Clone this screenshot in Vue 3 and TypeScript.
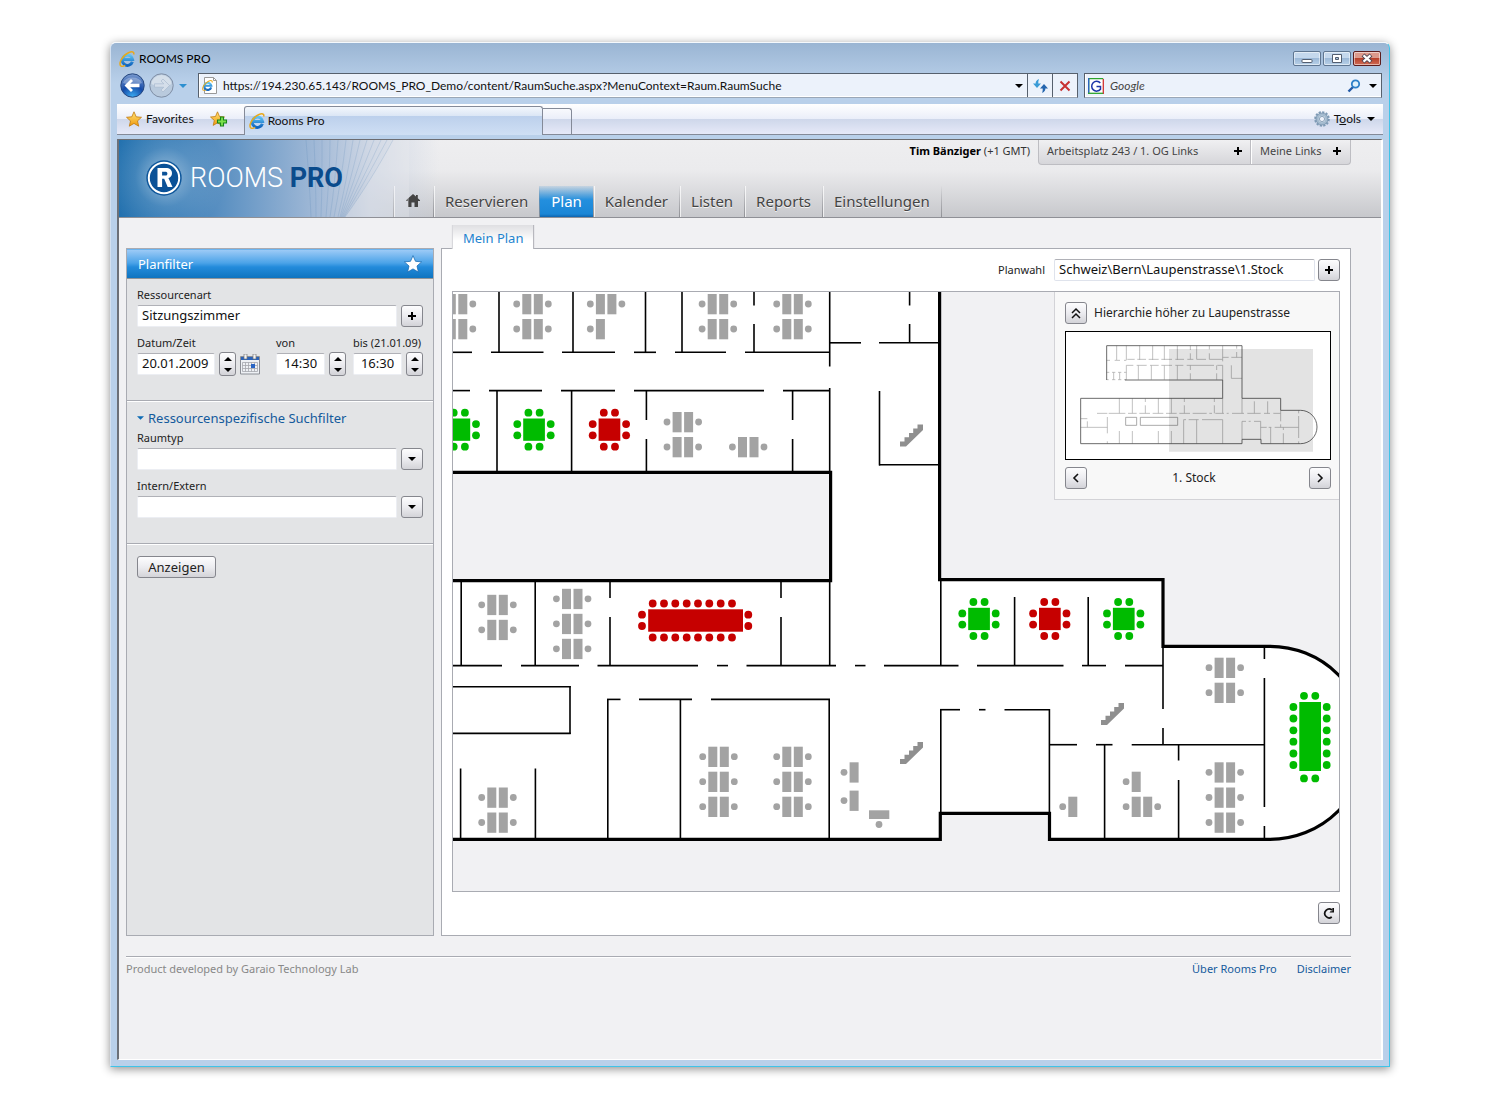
<script setup lang="ts">
import { ref } from 'vue'

type Wall = [number, number, number, number]
interface Desk { x: number; y: number; single?: boolean }
interface Room { x: number; y: number; free: boolean }

const navItems = ['Reservieren', 'Plan', 'Kalender', 'Listen', 'Reports', 'Einstellungen']
const activeNav = ref('Plan')

const address = ref('https://194.230.65.143/ROOMS_PRO_Demo/content/RaumSuche.aspx?MenuContext=Raum.RaumSuche')
const resource = ref('Sitzungszimmer')
const date = ref('20.01.2009')
const from = ref('14:30')
const until = ref('16:30')
const plan = ref('Schweiz\\Bern\\Laupenstrasse\\1.Stock')

const row = (y: number, pairs: [number, number][]): Wall[] => pairs.map(([a, b]) => [a, y, b, y])
const col = (x: number, pairs: [number, number][]): Wall[] => pairs.map(([a, b]) => [x, a, x, b])

const walls: Wall[] = [
  ...row(352.3, [[453, 472], [491, 543.5], [562, 615], [634, 656], [675, 726], [745, 830]]),
  ...row(390.6, [[453, 470], [489, 542], [561, 615], [634, 764], [783, 830]]),
  ...row(342.8, [[830, 861], [879, 939]]),
  ...row(464.8, [[879, 939]]),
  ...row(665.6, [[453, 502], [521, 579], [597.5, 698], [717, 728], [746.5, 836], [855, 865.5], [884, 958.5], [977, 1063.5], [1082, 1106], [1125, 1163]]),
  ...row(699.4, [[607, 620.5], [639, 692], [711, 830]]),
  ...row(709.7, [[940, 960], [979, 985.5], [1004.5, 1050]]),
  ...row(744.7, [[1050, 1077], [1096, 1112.5], [1131.7, 1264]]),
  ...row(686.7, [[453, 570.7]]),
  ...row(733.4, [[453, 570.7]]),
  ...col(570, [[686, 734]]),
  ...col(499, [[292, 352]]),
  ...col(573, [[292, 352]]),
  ...col(645.5, [[292, 352]]),
  ...col(682, [[292, 352]]),
  ...col(754, [[292, 305.5], [324, 352]]),
  ...col(829.7, [[292, 366.5], [388, 472], [581, 666]]),
  ...col(909.6, [[292, 305.5], [324, 343]]),
  ...col(879.5, [[391, 465.5]]),
  ...col(497, [[390, 471]]),
  ...col(571.6, [[390, 471]]),
  ...col(646.4, [[390, 420], [439, 471]]),
  ...col(792.6, [[390, 420], [439, 471]]),
  ...col(461.2, [[581, 665]]),
  ...col(535.2, [[581, 665]]),
  ...col(610, [[581, 598], [617, 665]]),
  ...col(781, [[581, 598], [617, 665]]),
  ...col(460.6, [[768.5, 838]]),
  ...col(535.4, [[768.5, 838]]),
  ...col(607.8, [[699, 838]]),
  ...col(680.4, [[699, 838]]),
  ...col(829.2, [[699, 838]]),
  ...col(940.8, [[581, 666], [709, 813]]),
  ...col(1049.4, [[709, 813]]),
  ...col(1014.6, [[597, 665]]),
  ...col(1088.2, [[597, 665]]),
  ...col(1163, [[647, 709], [728, 745]]),
  ...col(1264.4, [[647, 659], [678, 807], [826, 838]]),
  ...col(1104.6, [[745, 838]]),
  ...col(1178.6, [[744, 760.5], [780, 838]]),
]

const at = (x: number, ys: number[]): Desk[] => ys.map((y) => ({ x, y }))
const desks: Desk[] = [
  ...at(457, [304, 329]),
  ...at(532.5, [304, 329]),
  ...at(606.1, [304]),
  { x: 606.1, y: 329, single: true },
  ...at(717.9, [304, 329]),
  ...at(792.5, [304, 329]),
  ...at(682.8, [422, 447]),
  ...at(748.2, [447]),
  ...at(497.5, [604.8, 629.8, 797.5, 822.5]),
  ...at(572.2, [598.8, 623.8, 648.8]),
  ...at(718.5, [756.7, 781.7, 806.7]),
  ...at(792.5, [756.7, 781.7, 806.7]),
  { x: 859.8, y: 772.3, single: true },
  { x: 859.8, y: 800.6, single: true },
  { x: 1078.5, y: 806.7, single: true },
  { x: 1141.9, y: 781.7, single: true },
  ...at(1141.9, [806.7]),
  ...at(1224.8, [667.7, 692.7, 772.3, 797.5, 822.5]),
]

const rooms: Room[] = [
  { x: 459.3, y: 429.7, free: true },
  { x: 534, y: 429.7, free: true },
  { x: 609.4, y: 429.7, free: false },
  { x: 979, y: 619, free: true },
  { x: 1049.8, y: 619, free: false },
  { x: 1123.7, y: 619, free: true },
]
const seats: [number, number][] = [
  [-5.6, -17], [5.6, -17], [-5.6, 17], [5.6, 17],
  [-16.7, -5.6], [-16.7, 5.6], [16.7, -5.6], [16.7, 5.6],
]
const stairs: [number, number][] = [[900, 424.5], [900, 742], [1101, 703]]
const longSeats = [652.7, 664, 675.3, 686.7, 698, 709.3, 720.7, 732]
const tallSeats = [707, 718.5, 730.3, 741.7, 753.5, 765]

const miniWalls: Wall[] = [
  ...row(361, [[200, 210], [224, 240], [252, 259]]),
  ...row(358, [[262, 284], [292, 318], [326, 356], [364, 396], [406, 432], [442, 460], [470, 498], [508, 548]]),
  ...row(352, [[548, 566], [574, 606]]),
  ...row(376, [[259, 280], [290, 320], [330, 356], [364, 396], [406, 430], [440, 522], [532, 548]]),
  ...row(397, [[200, 208], [216, 226], [234, 244], [252, 259]]),
  ...row(419, [[200, 206], [216, 226], [234, 244], [252, 259]]),
  ...row(415, [[574, 606]]),
  ...row(520, [[171, 202], [206, 256], [264, 290], [298, 330], [338, 370], [378, 410], [418, 450], [458, 500], [508, 516], [526, 552], [560, 566], [576, 612], [622, 662], [672, 690], [700, 722]]),
  ...row(539, [[431, 438], [446, 476], [486, 548]]),
  ...row(544, [[606, 618], [626, 632], [642, 662]]),
  ...row(562, [[122, 202], [662, 680], [686, 694], [704, 776]]),
  ...row(536, [[122, 142]]),
  ...col(221, [[397, 419]]), ...col(239, [[397, 419]]),
  ...col(142, [[544, 562]]),
  ...[230, 259, 299, 338, 373, 412].flatMap((x) => col(x, [[317, 360]])),
  ...col(451, [[317, 330], [340, 358]]), ...col(470, [[317, 358]]),
  ...col(508, [[317, 328], [340, 358]]), ...col(548, [[317, 364], [376, 420]]),
  ...col(590, [[317, 326], [336, 352]]), ...col(574, [[376, 415]]),
  ...[259, 295, 334, 373, 412].flatMap((x) => col(x, [[376, 419]])),
  ...col(451, [[376, 390], [400, 419]]), ...col(530, [[376, 390], [400, 419]]),
  ...[238, 277, 355, 394, 548].flatMap((x) => col(x, [[475, 520]])),
  ...col(316, [[475, 486], [496, 520]]), ...col(433, [[475, 486], [496, 520]]),
  ...col(523, [[475, 486], [496, 520]]), ...col(606, [[475, 520], [544, 598]]),
  ...[643, 683].flatMap((x) => col(x, [[484, 520]])),
  ...col(202, [[531, 580], [604, 611]]),
  ...[238, 277, 355, 394].flatMap((x) => col(x, [[573, 611]])),
  ...[431, 470, 548].flatMap((x) => col(x, [[539, 611]])),
  ...col(662, [[544, 598]]), ...col(692, [[562, 611]]),
  ...col(730, [[562, 570], [580, 611]]),
  ...col(722, [[511, 544], [553, 562]]),
  ...col(776, [[511, 520], [528, 594], [604, 611]]),
]
</script>

<template>
  <svg class="defs" aria-hidden="true">
    <defs>
      <linearGradient id="blueE" x1="0" y1="0" x2="0" y2="1">
        <stop offset="0" stop-color="#5cc4f5" />
        <stop offset="1" stop-color="#0f63bd" />
      </linearGradient>
      <linearGradient id="gold" x1="0" y1="0" x2="0" y2="1">
        <stop offset="0" stop-color="#ffe478" />
        <stop offset="1" stop-color="#f0990c" />
      </linearGradient>
      <radialGradient id="navBlue" cx=".5" cy="1" r="1">
        <stop offset="0" stop-color="#3cb0f5" />
        <stop offset=".5" stop-color="#154aa8" />
        <stop offset="1" stop-color="#7d9dd0" />
      </radialGradient>
    </defs>
    <symbol id="ie" viewBox="0 0 16 16">
      <path d="M13.400 10.800A5.200 5.200 0 1 1 13.600 8.400H4.600" fill="none" stroke="url(#blueE)" stroke-width="3" />
      <path d="M2 15.200C-1 12.500 3.500 4.500 9.500 1.800 13 .2 15.600 .6 14.600 3.600" fill="none" stroke="#e9a91c" stroke-width="1.500" />
      <path d="M2 15.200c1.200.6 2.800 0 4.200-.9" fill="none" stroke="#e9a91c" stroke-width="1.300" />
    </symbol>
    <symbol id="plus" viewBox="0 0 8 8">
      <path d="M3 0h2v3h3v2H5v3H3V5H0V3h3z" />
    </symbol>
    <symbol id="down" viewBox="0 0 8 4">
      <path d="M0 0h8L4 4z" />
    </symbol>
    <symbol id="up" viewBox="0 0 8 4">
      <path d="M0 4h8L4 0z" />
    </symbol>
  </svg>

  <div class="desktop">
    <div class="window">
      <div class="titlebar">
        <svg class="ie"><use href="#ie" /></svg>
        <span class="title">ROOMS PRO</span>
        <div class="winbuttons">
          <button type="button" aria-label="Minimieren">
            <svg width="12" height="12" viewBox="0 0 12 12"><rect x="1" y="6.500" width="10" height="3" rx=".5" fill="#fff" stroke="#535e70" /></svg>
          </button>
          <button type="button" aria-label="Wiederherstellen">
            <svg width="12" height="12" viewBox="0 0 12 12"><path d="M1.500 1.500h9v8h-9z" fill="#fff" stroke="#535e70" /><path d="M4.500 4.500h3v2h-3z" fill="#aac4e0" stroke="#535e70" /></svg>
          </button>
          <button type="button" class="close" aria-label="Schliessen">
            <svg width="12" height="12" viewBox="0 0 12 12"><path d="M2 2l8 7M10 2l-8 7" stroke="#4e4350" stroke-width="4.200" /><path d="M2.500 2.400l7 6.200M9.500 2.400l-7 6.200" stroke="#fff" stroke-width="2.200" /></svg>
          </button>
        </div>
      </div>

      <div class="addressrow">
        <div class="history">
          <button type="button" class="round" aria-label="Zurück">
            <svg width="25" height="25" viewBox="0 0 25 25"><circle cx="12.500" cy="12.500" r="11.700" fill="url(#navBlue)" stroke="#26477f" /><path d="M3 10a10 8 0 0 1 19 0c-5 2-13 2-19 0z" fill="#fff" opacity=".3" /><path d="M4.500 12.500l6.500-6.500 2 2-2.800 2.800h9.300v3.400h-9.300L13 17l-2 2z" fill="#fff" /></svg>
          </button>
          <button type="button" class="round" aria-label="Vorwärts">
            <svg width="25" height="25" viewBox="0 0 25 25"><circle cx="12.500" cy="12.500" r="11.700" fill="#b9cadd" stroke="#7f8ea5" /><path d="M2.500 11a10 9 0 0 1 20 0c-5 3-14 3-20 0z" fill="#fff" opacity=".4" /><path d="M20.500 12.500L14 6l-2 2 2.800 2.800H5.500v3.400h9.300L12 17l2 2z" fill="#d4deea" stroke="#a5b6cb" stroke-width=".6" /></svg>
          </button>
          <svg class="tri" fill="#2c8fd0"><use href="#down" /></svg>
        </div>
        <div class="address">
          <svg width="16" height="18" viewBox="0 0 16 18"><path d="M2.500.5h9l3 3v13h-12z" fill="#fff" stroke="#999" /><path d="M11.500.5v3h3" fill="none" stroke="#999" /><use href="#ie" x="0" y="3" width="11" height="11" /></svg>
          <input v-model="address" aria-label="Adresse" type="text">
          <svg class="tri"><use href="#down" /></svg>
          <button type="button" aria-label="Aktualisieren">
            <svg width="15" height="14" viewBox="0 0 15 14"><path d="M6 0C3 1.200 2.600 3 2.700 4.500H0L4 9l4-4.500H5.300C5.200 3 5.300 1.500 6 0z" fill="#3a9bd6" /><path d="M9 14c3-1.200 3.400-3 3.300-4.500H15L11 5 7 9.500h2.700C9.800 11 9.700 12.500 9 14z" fill="#2465ae" /></svg>
          </button>
          <button type="button" aria-label="Stopp">
            <svg width="12" height="12" viewBox="0 0 12 12"><path d="M1.500 1.500l9 9M10.500 1.500l-9 9" stroke="#c83232" stroke-width="2" /></svg>
          </button>
        </div>
        <div class="search">
          <svg width="16" height="16" viewBox="0 0 16 16"><path d="M0 0h16v16H0z" fill="#fff" /><path d="M.7 16V.7h14.600" fill="none" stroke="#2ca32c" stroke-width="1.300" /><path d="M.7 0v16" stroke="#2c62c8" stroke-width="1.300" /><path d="M15.300 1v15" stroke="#d03030" stroke-width="1.300" /><path d="M0 15.300h15" stroke="#2ca32c" stroke-width="1.300" /><path d="M12.300 5A4.900 4.900 0 1 0 12.500 11.200V8.500H8.500" fill="none" stroke="#1d35a8" stroke-width="1.500" /></svg>
          <input type="search" placeholder="Google" aria-label="Google-Suche">
          <svg width="14" height="14" viewBox="0 0 14 14"><path d="M6 8l-4.500 4.500" stroke="#2358a5" stroke-width="2.400" /><circle cx="8.500" cy="5" r="3.700" fill="#dff0fb" stroke="#2c7fc8" stroke-width="1.800" /></svg>
          <svg class="tri dark"><use href="#down" /></svg>
        </div>
      </div>

      <div class="tabrow">
        <button type="button" class="fav">
          <svg width="16" height="16" viewBox="0 0 16 16"><path d="M8 .8l2.200 5 5.300.5-4 3.600 1.200 5.300L8 12.400l-4.700 2.800 1.200-5.300-4-3.600 5.300-.5z" fill="url(#gold)" stroke="#c07a10" stroke-width=".8" /></svg>
          Favorites
        </button>
        <button type="button" class="addfav" aria-label="Zu Favoriten hinzufügen">
          <svg width="18" height="16" viewBox="0 0 18 16"><path d="M7.500.8l2 4.700 5 .5-3.800 3.400 1.100 5-4.300-2.600-4.300 2.600 1.100-5L.5 6l5-.5z" fill="url(#gold)" stroke="#c07a10" stroke-width=".8" /><path d="M10.500 6h3v3h3v3h-3v3h-3v-3h-3V9h3z" fill="#7be04a" stroke="#17851a" stroke-width="1.100" /></svg>
        </button>
        <a href="#" class="browsertab"><svg class="ie"><use href="#ie" /></svg>Rooms Pro</a>
        <button type="button" class="newtab" aria-label="Neuer Tab"></button>
        <button type="button" class="tools">
          <svg width="16" height="16" viewBox="0 0 16 16"><circle cx="8" cy="8" r="6.800" fill="none" stroke="#7d9ab5" stroke-width="2" stroke-dasharray="2.200 1.360" /><circle cx="8" cy="8" r="4.700" fill="#dde8f1" stroke="#a3bace" stroke-width="2.800" /><circle cx="8" cy="8" r="6" fill="none" stroke="#7691ab" stroke-width=".8" /><circle cx="8" cy="8" r="2.600" fill="#eef2fa" stroke="#7691ab" stroke-width=".8" /></svg>
          <span>T<u>o</u>ols</span>
          <svg class="tri"><use href="#down" /></svg>
        </button>
      </div>

      <div class="viewport">
        <header class="apphead">
          <svg class="swoosh" width="290" height="77" viewBox="0 0 290 77" aria-hidden="true">
            <path d="M274 0c-14 26-30 52-48 77h64V0z" fill="#ececf0" opacity=".3" />
            <g fill="none" stroke="#4f7db0" stroke-width=".6" opacity=".3">
              <path d="M274 0c-14 26-30 52-48 77M268 0c-14 26-28 52-43 77M262 0c-12 26-25 52-38 77M255 0c-10 26-21 52-32 77M248 0c-8 26-17 52-26 77M241 0c-6 26-13 52-20 77M234 0c-4 26-9 52-15 77M227 0c-3 26-7 52-12 77M219 0c-2 26-4 52-8 77M211 0c0 26-2 52-4 77M203 0c0 26 0 52-1 77M195 0c1 26 2 52 2 77M187 0c2 26 4 52 5 77" />
            </g>
          </svg>
          <div class="logo">
            <svg width="36" height="36" viewBox="0 0 36 36" aria-hidden="true"><circle cx="18" cy="18" r="17.700" fill="#0d569b" /><circle cx="18" cy="18" r="15.200" fill="#0a5197" stroke="#fff" stroke-width="2" /><path d="M11.500 8h8.200c4 0 6.300 1.900 6.300 5.300 0 2.500-1.400 4.200-3.600 4.800L26.500 27h-4.800l-3.500-8.200h-2.100V27h-4.600zM16.100 11.700v3.900h3c1.500 0 2.300-.6 2.300-1.900 0-1.400-.8-2-2.300-2z" fill="#fff" fill-rule="evenodd" /></svg>
            <span class="brand">ROOMS <b>PRO</b></span>
          </div>
          <div class="headmain">
            <div class="userbar">
              <span class="user"><b>Tim Bänziger</b> (+1 GMT)</span>
              <div class="quick">
                <button type="button" class="wide">Arbeitsplatz 243 / 1. OG Links <svg class="p"><use href="#plus" /></svg></button>
                <button type="button">Meine Links <svg class="p"><use href="#plus" /></svg></button>
              </div>
            </div>
            <nav class="nav">
              <a href="#" class="home" aria-label="Startseite"><svg width="14" height="13" viewBox="0 0 14 13"><path d="M7 0l3 2.600V1h1.800v3.200L14 6.200v.8h-2v6H8.500V8.500h-3V13H2V7H0v-.8z" fill="#444" /></svg></a>
              <a v-for="n in navItems" :key="n" href="#" :class="{ on: n === activeNav }" @click.prevent="activeNav = n">{{ n }}</a>
            </nav>
          </div>
        </header>

        <div class="content">
          <form class="filter" @submit.prevent>
            <div class="filterhead">
              <h2>Planfilter</h2>
              <svg width="18" height="18" viewBox="0 0 18 18"><path d="M9 .6l2.500 5.700 6.100.6-4.600 4.100 1.400 6.100L9 13.900l-5.400 3.200L5 11 .4 6.900l6.100-.6z" fill="#fff" stroke="#1b6db5" stroke-width=".8" /></svg>
            </div>
            <section>
              <label for="res">Ressourcenart</label>
              <div class="field">
                <input id="res" v-model="resource" type="text">
                <button type="button" class="sq" aria-label="Ressourcenart wählen"><svg class="p"><use href="#plus" /></svg></button>
              </div>
              <div class="times">
                <div>
                  <label for="date">Datum/Zeit</label>
                  <div class="field">
                    <input id="date" v-model="date" class="date" type="text">
                    <span class="spin">
                      <button type="button" aria-label="Tag später"><svg><use href="#up" /></svg></button>
                      <button type="button" aria-label="Tag früher"><svg><use href="#down" /></svg></button>
                    </span>
                    <button type="button" class="cal" aria-label="Kalender">
                      <svg width="20" height="21" viewBox="0 0 20 21"><path d="M.5 2.500h19v17.500H.5z" fill="#eef1f5" stroke="#8c8f96" /><path d="M1 3h18v3H1z" fill="#2b63b8" /><path d="M4 0h3v5H4zM13 0h3v5h-3z" fill="#f4f4f4" stroke="#777" stroke-width=".7" /><path d="M2.500 8.500h15M2.500 11.500h15M2.500 14.500h15M2.500 17.500h15M2.500 8.500v9M5.500 8.500v9M8.500 8.500v9M11.500 8.500v9M14.500 8.500v9M17.500 8.500v9" stroke="#a4a7ad" stroke-width=".8" /><path d="M11 10h4v4h-4z" fill="#2864c4" /></svg>
                    </button>
                  </div>
                </div>
                <div>
                  <label for="from">von</label>
                  <div class="field">
                    <input id="from" v-model="from" class="time" type="text">
                    <span class="spin">
                      <button type="button" aria-label="Von später"><svg><use href="#up" /></svg></button>
                      <button type="button" aria-label="Von früher"><svg><use href="#down" /></svg></button>
                    </span>
                  </div>
                </div>
                <div>
                  <label for="until">bis (21.01.09)</label>
                  <div class="field">
                    <input id="until" v-model="until" class="time" type="text">
                    <span class="spin">
                      <button type="button" aria-label="Bis später"><svg><use href="#up" /></svg></button>
                      <button type="button" aria-label="Bis früher"><svg><use href="#down" /></svg></button>
                    </span>
                  </div>
                </div>
              </div>
            </section>
            <section>
              <h3><svg class="tri"><use href="#down" /></svg>Ressourcenspezifische Suchfilter</h3>
              <label for="type">Raumtyp</label>
              <div class="drop">
                <span class="box"></span><span class="sq"><svg class="tri"><use href="#down" /></svg></span>
                <select id="type"><option value=""></option></select>
              </div>
              <label for="scope" class="next">Intern/Extern</label>
              <div class="drop">
                <span class="box"></span><span class="sq"><svg class="tri"><use href="#down" /></svg></span>
                <select id="scope"><option value=""></option></select>
              </div>
            </section>
            <div class="actions"><button type="submit">Anzeigen</button></div>
          </form>

          <main>
            <a href="#" class="plantab">Mein Plan</a>
            <div class="panel">
              <div class="choose">
                <label for="plan">Planwahl</label>
                <input id="plan" v-model="plan" type="text">
                <button type="button" class="sq" aria-label="Plan wählen"><svg class="p"><use href="#plus" /></svg></button>
              </div>

              <div class="floor">
                <svg class="floorplan" viewBox="453 292 886 599" preserveAspectRatio="xMinYMin slice" role="img" aria-label="Grundriss 1. Stock">
                  <path d="M440 280H939.600V579.700H1163V646.300H1270A96.500 96.500 0 0 1 1270 839.300H1049.500V813.300H940.300V839.300H440Z" fill="#fff" stroke="#000" stroke-width="3.200" />
                  <path d="M440 472.300H830.600V580.600H440Z" fill="#f1f1f3" stroke="#000" stroke-width="3.200" />
                  <line v-for="(w, i) in walls" :key="i" :x1="w[0]" :y1="w[1]" :x2="w[2]" :y2="w[3]" stroke="#000" stroke-width="1.600" />
                  <g fill="#a3a3a3">
                    <g v-for="(d, i) in desks" :key="i" :transform="`translate(${d.x} ${d.y})`">
                      <rect x="-10.200" y="-10" width="9" height="20.300" />
                      <circle cx="-15.800" cy="0" r="3.400" />
                      <template v-if="!d.single">
                        <rect x="1.300" y="-10" width="9" height="20.300" />
                        <circle cx="15.800" cy="0" r="3.400" />
                      </template>
                    </g>
                    <rect x="869" y="810.300" width="20.300" height="8.700" />
                    <circle cx="879" cy="824.500" r="3.400" />
                  </g>
                  <path v-for="(s, i) in stairs" :key="i" d="M23 0h-5.500v4h-4.300v4.500H9v4.300H4.500V17H0v5h6L23 5.500z" :transform="`translate(${s[0]} ${s[1]})`" fill="#8f8f8f" />
                  <g v-for="(r, i) in rooms" :key="i" :transform="`translate(${r.x} ${r.y})`" :fill="r.free ? '#00bb00' : '#c60000'">
                    <rect x="-10.800" y="-11.200" width="21.700" height="22.300" />
                    <circle v-for="(s, j) in seats" :key="j" :cx="s[0]" :cy="s[1]" r="3.900" />
                  </g>
                  <g fill="#c60000">
                    <rect x="648.200" y="609.300" width="94.800" height="22.400" />
                    <template v-for="x in longSeats" :key="x">
                      <circle :cx="x" cy="603.500" r="3.900" /><circle :cx="x" cy="637.500" r="3.900" />
                    </template>
                    <template v-for="y in [614.7, 626]" :key="y">
                      <circle cx="642" :cy="y" r="3.900" /><circle cx="748.300" :cy="y" r="3.900" />
                    </template>
                  </g>
                  <g fill="#00bb00">
                    <rect x="1299.300" y="702" width="21.700" height="69" />
                    <template v-for="y in tallSeats" :key="y">
                      <circle cx="1293.400" :cy="y" r="3.900" /><circle cx="1326.700" :cy="y" r="3.900" />
                    </template>
                    <template v-for="x in [1304, 1315.3]" :key="x">
                      <circle :cx="x" cy="695.800" r="3.900" /><circle :cx="x" cy="778.400" r="3.900" />
                    </template>
                  </g>
                </svg>

                <aside class="overview">
                  <div class="line">
                    <button type="button" class="sq" aria-label="Ebene höher"><svg width="10" height="12" viewBox="0 0 10 12"><path d="M1 6l4-4 4 4M1 11l4-4 4 4" fill="none" stroke="#111" stroke-width="1.500" /></svg></button>
                    <span>Hierarchie höher zu Laupenstrasse</span>
                  </div>
                  <svg class="mini" viewBox="78 276 792 381" role="img" aria-label="Übersicht">
                    <g fill="none" stroke="#a8a8a8" stroke-width="2.200">
                      <line v-for="(w, i) in miniWalls" :key="i" :x1="w[0]" :y1="w[1]" :x2="w[2]" :y2="w[3]" />
                      <path d="M257 532h33v24h-33zM301 532h112v24H301z" stroke="#8a8a8a" />
                    </g>
                    <path d="M200 420V317H606V475H722V511H782A49 50 0 0 1 782 611H663V598H606V611H122V475H548V420H255" fill="none" stroke="#555" stroke-width="2.600" />
                    <path d="M387 327H819V635H387Z" fill="#000" opacity=".11" />
                  </svg>
                  <div class="line between">
                    <button type="button" class="sq" aria-label="Vorheriger Stock"><svg width="8" height="10" viewBox="0 0 8 10"><path d="M6 1L2 5l4 4" fill="none" stroke="#111" stroke-width="1.600" /></svg></button>
                    <span>1. Stock</span>
                    <button type="button" class="sq" aria-label="Nächster Stock"><svg width="8" height="10" viewBox="0 0 8 10"><path d="M2 1l4 4-4 4" fill="none" stroke="#111" stroke-width="1.600" /></svg></button>
                  </div>
                </aside>
              </div>

              <div class="below">
                <button type="button" class="sq" aria-label="Neu laden"><svg width="12" height="12" viewBox="0 0 12 12"><path d="M8.800 10A4.400 4.400 0 1 1 9 3" fill="none" stroke="#111" stroke-width="1.700" /><path d="M11 1v4.500H6.500L7.500 4.200h1.800V1z" fill="#111" /></svg></button>
              </div>
            </div>
          </main>
        </div>

        <footer>
          <span>Product developed by Garaio Technology Lab</span>
          <div><a href="#">Über Rooms Pro</a><a href="#">Disclaimer</a></div>
        </footer>
      </div>
    </div>
  </div>
</template>

<style>
body {
  margin: 0;
  background: #fff;
}
</style>

<style scoped>
* {
  box-sizing: border-box;
}
button,
input,
select {
  margin: 0;
  padding: 0;
  border: 0;
  background: none;
  font: inherit;
  color: inherit;
  outline: 0;
}
svg {
  display: block;
  flex: none;
}
a {
  text-decoration: none;
  color: inherit;
}
h2,
h3 {
  margin: 0;
  font-weight: 400;
}
.defs {
  position: absolute;
  width: 0;
  height: 0;
}
.ie {
  width: 16px;
  height: 16px;
}
.tri {
  width: 8px;
  height: 4px;
}
.p {
  width: 8px;
  height: 8px;
}
.desktop {
  display: flex;
  min-height: 100vh;
  padding: 42px 110px 48px;
  font: 11px/20px "Noto Sans", "Open Sans", sans-serif;
  color: #222;
}
.window {
  flex: 1;
  min-width: 0;
  display: flex;
  flex-direction: column;
  padding: 0 6px 6px;
  border: 1px solid #3fc4e8;
  border-left-color: #d3e0f0;
  border-top-color: #f4f8fc;
  border-radius: 6px 6px 0 0;
  background: linear-gradient(#9ab5d3, #b9d0ea 40px, #b9d0ea);
  box-shadow: 0 2px 10px rgba(0, 0, 0, 0.45);
}
.titlebar {
  display: flex;
  align-items: center;
  gap: 4px;
  height: 29px;
  padding: 2px 2px 0;
  font: 12px/20px Lato, sans-serif;
  color: #000;
}
.winbuttons {
  display: flex;
  gap: 2px;
  margin-left: auto;
}
.winbuttons button {
  display: flex;
  align-items: center;
  justify-content: center;
  width: 28px;
  height: 15px;
  border: 1px solid #5f7691;
  border-radius: 2px;
  background: linear-gradient(#c4d8ed 50%, #9cb9d8 50%, #b8d0e8);
  box-shadow: inset 0 0 0 1px rgba(255, 255, 255, 0.5);
}
.winbuttons .close {
  border-color: #5c1d1d;
  background: linear-gradient(#dc9a8c 50%, #b8422c 50%, #cf6c55);
}
.addressrow {
  display: flex;
  gap: 6px;
  height: 32px;
  padding: 1px 1px 0 3px;
}
.history {
  display: flex;
  align-items: center;
  gap: 4px;
  width: 72px;
  height: 25px;
}
.history .tri {
  margin-left: 1px;
}
.address,
.search {
  display: flex;
  align-items: center;
  height: 25px;
  border: 1px solid #56606d;
  border-bottom-color: #9aa7b7;
  background: #ecf2fb;
  box-shadow: inset 0 -1px #fff, inset 1px 0 #fff;
  font: 12px/20px Lato, sans-serif;
  color: #111;
}
.address {
  flex: 1;
  padding-left: 3px;
}
.address input {
  flex: 1;
  min-width: 0;
  margin-left: 5px;
}
.address .tri {
  margin-right: 4px;
}
.address button {
  display: flex;
  align-items: center;
  justify-content: center;
  width: 25px;
  height: 23px;
  border-left: 1px solid #56606d;
}
.search {
  width: 298px;
  padding: 0 4px 0 3px;
}
.search input {
  flex: 1;
  min-width: 0;
  margin-left: 6px;
  font-style: italic;
}
.search input::placeholder {
  color: #444;
}
.search .tri {
  margin-left: 8px;
}
.tabrow {
  display: flex;
  align-items: flex-end;
  height: 31px;
  border-bottom: 1px solid #848a98;
  background: linear-gradient(#fff, #eaeef9 15px, #ced7ea 15px, #e6e9f8);
  color: #111;
}
.fav,
.tools {
  display: flex;
  align-items: center;
  gap: 4px;
  height: 30px;
}
.fav {
  padding-left: 9px;
}
.fav,
.tools,
.browsertab {
  font: 12px/20px Lato, sans-serif;
}
.addfav {
  display: flex;
  align-items: center;
  height: 30px;
  margin: 0 16px;
}
.browsertab {
  display: flex;
  align-items: center;
  gap: 3px;
  width: 299px;
  height: 29px;
  margin-bottom: -1px;
  padding: 0 4px 1px;
  border: 1px solid #848a98;
  border-bottom: 0;
  border-radius: 3px 3px 0 0;
  background: linear-gradient(#f3f7fc, #dbe6f5 9px, #bcd0ec 9px, #cfdff4);
}
.newtab {
  width: 29px;
  height: 26px;
  border: 1px solid #848a98;
  border-left: 0;
  border-bottom: 0;
  border-radius: 0 3px 0 0;
}
.tools {
  margin-left: auto;
  padding-right: 8px;
}
.tools .tri {
  margin-left: 2px;
}
.viewport {
  flex: 1;
  display: flex;
  flex-direction: column;
  margin-top: 4px;
  border: solid #fff;
  border-width: 1px 2px 1px 2px;
  border-left-color: #6c7078;
  border-top-color: #6c6c70;
  background: #f1f1f3;
}
.apphead {
  position: relative;
  display: flex;
  height: 78px;
  border-bottom: 1px solid #8f9096;
  background:
    radial-gradient(circle at 46px 37px, rgba(255, 255, 255, 0.5), rgba(255, 255, 255, 0.12) 30px, rgba(255, 255, 255, 0) 60px),
    linear-gradient(90deg, #2170ae, #3a7eb8 60px, #6f9cc8 130px, #a3bad7 200px, rgba(200, 210, 226, 0.8) 250px, rgba(236, 236, 238, 0) 320px),
    linear-gradient(#eeeef0, #ebebed 30px, #c7c8cc);
}
.swoosh {
  position: absolute;
  left: 0;
  top: 0;
}
.logo {
  position: relative;
  display: flex;
  align-items: center;
  gap: 8px;
  width: 274px;
  height: 75px;
  padding-left: 27px;
}
.brand {
  font: 300 27px/32px Roboto, sans-serif;
  color: #fff;
  white-space: nowrap;
}
.brand b {
  font-weight: 700;
  color: #0a4b8c;
}
.headmain {
  flex: 1;
  display: flex;
  flex-direction: column;
  justify-content: space-between;
}
.userbar {
  display: flex;
  justify-content: flex-end;
  gap: 8px;
  padding-right: 30px;
}
.user {
  line-height: 22px;
  color: #333;
}
.user b {
  color: #000;
}
.quick {
  display: flex;
  border: 1px solid #bdbdc2;
  border-top: 0;
  border-radius: 0 0 4px 4px;
  background: linear-gradient(#f0f0f2, #d6d6da);
}
.quick button {
  display: flex;
  align-items: center;
  justify-content: space-between;
  width: 99px;
  height: 24px;
  padding: 0 9px 2px 8px;
  border-left: 1px solid #fff;
  color: #444;
}
.quick .p {
  fill: #000;
}
.quick .wide {
  width: 212px;
  padding-right: 8px;
  border-left: 0;
  border-right: 1px solid #bdbdc2;
}
.nav {
  display: flex;
  height: 31px;
  font: 15px/31px "Noto Sans", sans-serif;
  color: #444;
  text-shadow: 0 1px #f4f4f4;
}
.nav a {
  padding: 0 11px;
  border-left: 1px solid #98989c;
  border-image: linear-gradient(rgba(140, 140, 145, 0), #8f9095) 1;
  box-shadow: inset 1px 0 rgba(255, 255, 255, 0.7);
}
.nav a:last-child {
  border-right: 1px solid #98989c;
}
.nav .home {
  width: 40px;
  padding: 8px 0 0 12px;
}
.nav .on {
  background: linear-gradient(rgba(60, 150, 220, 0.15), #238fde 14px, #1a86d6 28px, #0d64ae);
  box-shadow: none;
  color: #fff;
  text-shadow: none;
}
.content {
  display: flex;
  gap: 7px;
  padding: 0 30px 0 7px;
}
.filter {
  width: 308px;
  margin-top: 30px;
  border: 1px solid #a9abb2;
  background: #e3e4e6;
}
.filterhead {
  display: flex;
  align-items: center;
  justify-content: space-between;
  height: 30px;
  padding: 0 11px;
  border-bottom: 1px solid #8f9499;
  background: linear-gradient(#3b9de8, #9ccaf6 1px, #4ba3e8 14px, #238bdb 18px, #0f74c0);
}
.filterhead h2 {
  font-size: 13px;
  color: #fff;
}
.filter section {
  padding: 6px 10px 25px;
  border-bottom: 1px solid #a9abb2;
  box-shadow: 0 1px #fff;
}
.filter section + section {
  margin-top: 1px;
}
.filter label {
  display: block;
  white-space: nowrap;
}
.filter h3 {
  display: flex;
  align-items: center;
  gap: 4px;
  font-size: 13px;
  line-height: 20px;
  color: #145a9c;
}
.filter h3 .tri {
  fill: #0d6bb5;
  width: 7px;
}
.field {
  display: flex;
  align-items: center;
  gap: 4px;
  height: 22px;
}
.filter input {
  flex: 1;
  min-width: 0;
  height: 22px;
  padding: 0 4px 2px;
}
.filter input,
.box {
  border: 1px solid #eceef3;
  border-top-color: #b0b1b7;
  border-radius: 2px;
  background: #fff;
}
.filter input,
.choose input {
  font-size: 13px;
  color: #111;
}
.filter .date {
  flex: none;
  width: 78px;
}
.filter .time {
  flex: none;
  width: 49px;
  text-align: center;
}
.times {
  display: grid;
  grid-template-columns: 139px 77px 70px;
  margin-top: 6px;
}
.spin {
  display: flex;
  flex-direction: column;
  justify-content: space-around;
  flex: none;
  width: 17px;
  height: 24px;
}
.spin,
.sq,
.actions button {
  border: 1px solid #85868d;
  border-radius: 3px;
  background: linear-gradient(#fdfdfe, #ececf0 50%, #d3d3d8);
}
.spin button {
  display: flex;
  justify-content: center;
}
.spin svg {
  width: 8px;
  height: 4px;
}
.sq {
  display: flex;
  align-items: center;
  justify-content: center;
  flex: none;
  width: 22px;
  height: 22px;
}
.drop {
  display: grid;
  grid-template-columns: 1fr 22px;
  column-gap: 4px;
  height: 22px;
}
.drop select {
  grid-area: 1 / 1 / 2 / 3;
  appearance: none;
}
.drop .box {
  grid-area: 1 / 1;
}
.drop .sq {
  grid-area: 1 / 2;
}
.filter .next {
  margin-top: 6px;
}
.actions {
  padding: 12px 10px;
}
.actions button {
  width: 79px;
  height: 22px;
  font-size: 13px;
  line-height: 18px;
}
main {
  flex: 1;
  min-width: 0;
  padding-top: 7px;
}
.plantab {
  position: relative;
  display: block;
  width: fit-content;
  height: 24px;
  margin: 0 0 -1px 12px;
  padding: 0 10px;
  background: linear-gradient(#dfdfe2, #fff 16px);
  box-shadow: 1px 0 1px #b8b8be, -1px 0 1px #d8d8dc;
  clip-path: inset(0 -3px 0 -3px);
  font-size: 13px;
  line-height: 26px;
  color: #1d83cf;
}
.panel {
  padding: 10px 10px 11px;
  border: 1px solid #a9abb2;
  background: #fff;
}
.choose {
  display: flex;
  justify-content: flex-end;
  align-items: center;
}
.choose input {
  width: 261px;
  height: 22px;
  margin: 0 3px 0 9px;
  padding: 0 4px 2px;
  border: 1px solid #dfe3ec;
  border-top-color: #b0b1b7;
  border-radius: 2px;
}
.floor {
  position: relative;
  margin: 10px 0;
  border: 1px solid #a9abb2;
  background: #f1f1f3;
}
.floorplan {
  width: 100%;
  height: 599px;
}
.overview {
  position: absolute;
  top: 0;
  right: 0;
  width: 285px;
  padding: 10px 8px 10px 10px;
  border: solid #d3d3d7;
  border-width: 0 0 1px 1px;
  background: #f8f8f8;
  font-size: 12px;
}
.line {
  display: flex;
  align-items: center;
  gap: 7px;
  line-height: 22px;
}
.line.between {
  justify-content: space-between;
}
.line.between span {
  padding-right: 8px;
}
.mini {
  width: 266px;
  height: 129px;
  margin: 7px 0;
  border: 1px solid #000;
  background: #fff;
}
.below {
  display: flex;
  justify-content: flex-end;
}
footer {
  display: flex;
  justify-content: space-between;
  margin: 20px 30px 0 7px;
  padding-top: 2px;
  border-top: 1px solid #a9abb2;
  box-shadow: inset 0 1px #fff;
  color: #888;
}
footer div {
  display: flex;
  gap: 20px;
  color: #145a9c;
}
</style>
